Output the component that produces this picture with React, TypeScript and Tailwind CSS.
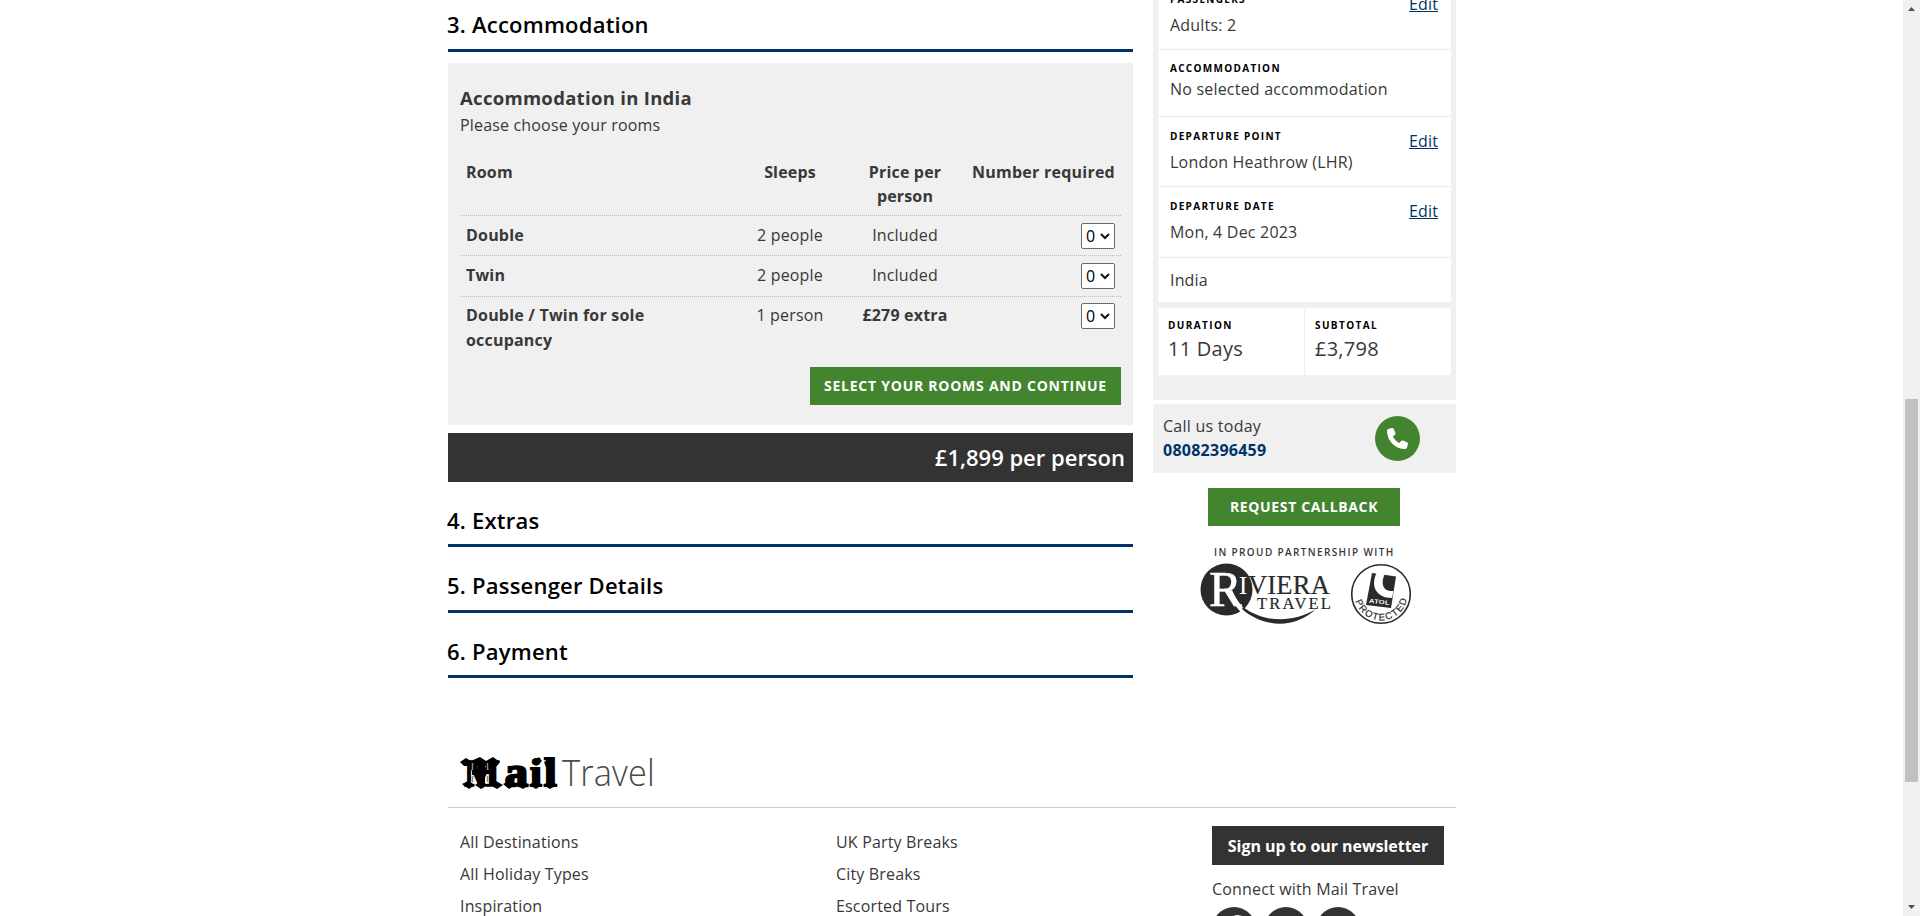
import React from "react";

const links = [
  ["All Destinations", "UK Party Breaks"],
  ["All Holiday Types", "City Breaks"],
  ["Inspiration", "Escorted Tours"],
];

const rooms = [
  { name: "Double", sleeps: "2 people", price: "Included", extra: false, row: "h-10 border-b pt-[7px]" },
  { name: "Twin", sleeps: "2 people", price: "Included", extra: false, row: "h-[41px] border-b pt-[7px]" },
  { name: "Double / Twin for sole occupancy", sleeps: "1 person", price: "£279 extra", extra: true, row: "h-[70px] pt-[6px]" },
];

function StepHeading({ children, className }: { children: React.ReactNode; className: string }) {
  return (
    <h2 className={"-ml-px w-[686px] text-[22px] font-semibold leading-8 tracking-[0.22px] text-black " + className}>
      {children}
    </h2>
  );
}

function Rule() {
  return <div className="h-[3px] bg-[#003468]" />;
}

function Quantity() {
  return (
    <button className="flex h-[26px] w-[34px] items-center justify-between rounded-[2px] border border-[#6b6b6b] bg-white pl-[4px] pr-[4px] text-base leading-6 text-black">
      <span>0</span>
      <svg width="10" height="8" viewBox="0 0 10 8" fill="none" stroke="#111" strokeWidth="2">
        <path d="M1 2l4 4 4-4" />
      </svg>
    </button>
  );
}

function Field({ label, value, edit, box, labelBox, editBox = "mt-[3px]" }: { label: string; value: string; edit?: boolean; box: string; labelBox: string; editBox?: string }) {
  return (
    <div className={"flex items-start justify-between border-b border-[#ececec] bg-white pl-3 pr-[13px] " + box}>
      <div>
        <div className={"text-[10px] font-bold uppercase leading-4 tracking-[1.3px] text-black " + labelBox}>{label}</div>
        <div className="leading-6 tracking-[0.2px]">{value}</div>
      </div>
      {edit && <a className={"leading-6 tracking-[0.12px] text-[#003468] underline " + editBox}>Edit</a>}
    </div>
  );
}

function RivieraLogo() {
  return (
    <svg width="133" height="62" viewBox="0 0 133 62" className="overflow-visible">
      <circle cx="26.500" cy="26.500" r="26" fill="#2b2a2b" />
      <text x="9" y="43" fontFamily="Liberation Serif, serif" fontSize="51" fill="#fff" stroke="#fff" strokeWidth=".5" textLength="33" lengthAdjust="spacingAndGlyphs">R</text>
      <path d="M32 27C37 38 42 44 48 49L43 51C37 46 32 38 28 29Z" fill="#fff" />
      <path d="M43 44C64 60 93 60 116 46C94 67 62 64 42 46Z" fill="#2b2a2b" />
      <text x="39" y="31" fontFamily="Liberation Serif, serif" fontSize="25" fill="#fff">I</text>
      <text x="48" y="31" fontFamily="Liberation Serif, serif" fontSize="28" fill="#2b2a2b" stroke="#2b2a2b" strokeWidth=".2" textLength="82" lengthAdjust="spacingAndGlyphs">VIERA</text>
      <text x="57" y="45.500" fontFamily="Liberation Serif, serif" fontSize="16.500" fill="#2b2a2b" stroke="#2b2a2b" strokeWidth=".2" textLength="74">TRAVEL</text>
    </svg>
  );
}

function AtolLogo() {
  return (
    <svg width="62" height="62" viewBox="0 0 62 62">
      <circle cx="31" cy="31" r="29.300" fill="#fff" stroke="#2b2a2b" strokeWidth="1.600" />
      <path d="M22 10L46 13.500L41 45L16 42Z" fill="#2b2a2b" />
      <path d="M26.500 10C20 24 27 35 42 35L43.500 28C34 29 30 22 34.500 11.500Z" fill="#fff" />
      <text x="19" y="41" fontFamily="Liberation Sans, sans-serif" fontWeight="bold" fontSize="6" fill="#fff" textLength="21" lengthAdjust="spacingAndGlyphs" transform="rotate(6 30 38)">ATOL</text>
      <path id="atol-arc" d="M4.500 33A26.600 26.600 0 0 0 57.500 33" fill="none" />
      <text fontFamily="Liberation Sans, sans-serif" fontSize="9.500" fill="#2b2a2b" stroke="#2b2a2b" strokeWidth=".2">
        <textPath href="#atol-arc" startOffset="5" textLength="70">PROTECTED</textPath>
      </text>
    </svg>
  );
}

function MailLogo() {
  return (
    <svg width="196" height="36" viewBox="0 0 196 36">
      <g fill="#000" stroke="#000" fontFamily="Liberation Serif, serif" fontWeight="bold">
        <text x="4" y="28.500" fontSize="37" strokeWidth="1.500" textLength="36" lengthAdjust="spacingAndGlyphs">M</text>
        <text x="45" y="29" fontSize="40" strokeWidth="2.500" textLength="23" lengthAdjust="spacingAndGlyphs">a</text>
        <text x="70" y="29" fontSize="38" strokeWidth="2" textLength="12" lengthAdjust="spacingAndGlyphs">i</text>
        <text x="84" y="29" fontSize="39" strokeWidth="2" textLength="13" lengthAdjust="spacingAndGlyphs">l</text>
      </g>
      <path d="M0 5L6 1L11 4L20 0L26 4L33 0L40 5L37 9H4ZM2 27L8 24L15 28L9 32ZM15 28L21 24L28 28L21 32ZM30 28L36 24L43 28L37 32ZM18 8H25V26H18ZM12 14L30 13V17L12 18ZM43 27L49 24L55 28L49 32ZM56 28L63 24L69 28L63 32ZM69 28L75 24L82 28L76 32ZM83 28L90 24L97 28L90 32ZM74 4L79 0L82 4L77 8ZM84 5L93 1V8L86 10Z" fill="#000" />
      <path d="M12.500 6V13M12.500 19V25M27.500 6V13M27.500 19V25" stroke="#888" strokeWidth="1.500" />
      <text x="102" y="28.500" fontFamily="Open Sans, sans-serif" fontWeight="300" fontSize="36" fill="#4a4a4a" textLength="93" lengthAdjust="spacingAndGlyphs">Travel</text>
    </svg>
  );
}

export default function App() {
  return (
    <div className="flex h-[916px] w-full overflow-hidden bg-white font-['Open_Sans',sans-serif] text-base tracking-[0.17px] text-[#383838]">
      <div className="flex-1 pl-[448px]">
        <div className="flex h-[738px] w-[1008px] justify-between">
          <main className="w-[685px]">
            <StepHeading className="h-[49px] pt-[8px]">3. Accommodation</StepHeading>
            <Rule />
            <section className="mt-[11px] h-[362px] bg-[#f0f0f0] px-3 pt-[22px]">
              <h3 className="text-[18.500px] font-bold leading-[26px] tracking-[0.3px]">Accommodation in India</h3>
              <p className="mt-[2px] leading-6">Please choose your rooms</p>
              <div className="mt-[15px] leading-[24.500px]">
                <div className="flex h-[64px] border-b border-dotted border-[#bbb] px-1.5 pt-[8px] font-bold leading-6">
                  <div className="w-[274px]">Room</div>
                  <div className="w-[100px] text-center">Sleeps</div>
                  <div className="ml-[15px] w-[100px] text-center">Price per person</div>
                  <div className="flex flex-1 justify-end whitespace-nowrap tracking-[0.25px]">Number required</div>
                </div>
                {rooms.map((r) => (
                  <div key={r.name} className={"flex border-dotted border-[#bbb] px-1.5 " + r.row}>
                    <div className="w-[274px] pr-16 font-bold tracking-[0.2px]">{r.name}</div>
                    <div className="w-[100px] text-center">{r.sleeps}</div>
                    <div className={r.extra ? "ml-[15px] w-[100px] text-center font-bold" : "ml-[15px] w-[100px] text-center"}>{r.price}</div>
                    <div className="flex flex-1 items-start justify-end"><Quantity /></div>
                  </div>
                ))}
              </div>
              <div className="flex justify-end">
                <button className="h-[38px] w-[311px] bg-[#43842f] text-sm font-bold tracking-[0.75px] text-white">SELECT YOUR ROOMS AND CONTINUE</button>
              </div>
            </section>
            <div className="mt-2 flex h-[49px] items-center justify-end bg-[#333] pr-2 text-[22px] font-semibold tracking-normal text-white">£1,899 per person</div>
            <StepHeading className="h-[62px] pt-[22px]">4. Extras</StepHeading>
            <Rule />
            <StepHeading className="h-[63px] pt-[22px]">5. Passenger Details</StepHeading>
            <Rule />
            <StepHeading className="h-[62px] pt-[22px]">6. Payment</StepHeading>
            <Rule />
          </main>

          <aside className="w-[303px]">
            <div className="h-[400px] bg-[#f0f0f0] px-[5px]">
              <Field label="Passengers" value="Adults: 2" edit box="h-[50px]" labelBox="-mt-[9px] mb-[6px]" editBox="-mt-[8px]" />
              <Field label="Accommodation" value="No selected accommodation" box="h-[67px]" labelBox="mt-[10px] mb-px" />
              <Field label="Departure point" value="London Heathrow (LHR)" edit box="h-[70px] pt-[9px]" labelBox="mt-[2px] mb-[6px]" />
              <Field label="Departure date" value="Mon, 4 Dec 2023" edit box="h-[71px] pt-[9px]" labelBox="mt-[2px] mb-[6px]" />
              <div className="h-11 bg-white pl-3 pt-[10px] leading-6">India</div>
              <div className="mt-[6px] flex h-[67px] gap-px">
                {[["Duration", "11 Days", "w-[146px]"], ["Subtotal", "£3,798", "w-[146px]"]].map(([a, b, w]) => (
                  <div key={a} className={"bg-white pl-[10px] pt-[9px] " + w}>
                    <div className="text-[10px] font-bold uppercase leading-4 tracking-[1.4px] text-black">{a}</div>
                    <div className="mt-[2px] text-[20px] leading-7 tracking-[0.25px]">{b}</div>
                  </div>
                ))}
              </div>
            </div>
            <div className="mt-1 flex h-[69px] items-center justify-between bg-[#f0f0f0] pl-[10px] pr-9">
              <div className="pb-[2px] leading-6 tracking-[0.25px]">
                <div>Call us today</div>
                <div className="font-bold text-[#003468]">08082396459</div>
              </div>
              <div className="flex h-[45px] w-[45px] items-center justify-center rounded-full bg-[#43842f]">
                <svg width="21" height="21" viewBox="0 0 512 512" fill="#fff">
                  <path d="M164.900 24.600c-7.700-18.600-28-28.500-47.400-23.200l-88 24C12.100 30.200 0 46 0 64c0 247.400 200.600 448 448 448 18 0 33.800-12.100 38.600-29.500l24-88c5.300-19.400-4.600-39.700-23.200-47.400l-96-40c-16.300-6.800-35.200-2.100-46.300 11.600L304.700 368C234.300 334.700 177.300 277.700 144 207.300L193.300 167c13.700-11.200 18.400-30 11.600-46.300l-40-96z" />
                </svg>
              </div>
            </div>
            <button className="ml-[55px] mt-[15px] block h-[38px] w-[192px] bg-[#43842f] text-sm font-bold tracking-[0.65px] text-white">REQUEST CALLBACK</button>
            <div className="ml-[61px] mt-[18px] whitespace-nowrap text-[10px] font-semibold leading-4 tracking-[1.370px]">IN PROUD PARTNERSHIP WITH</div>
            <div className="ml-[47px] mt-[3px] flex gap-[17px]">
              <RivieraLogo />
              <AtolLogo />
            </div>
          </aside>
        </div>

        <footer className="w-[1008px]">
          <div className="h-[70px] border-b border-[#ccc] pl-3 pt-[19px]">
            <MailLogo />
          </div>
          <div className="flex pl-3 pt-[18px]">
            <div className="w-[752px] pt-[4px]">
              {links.map(([a, b]) => (
                <div key={a} className="flex h-8 leading-6">
                  <a className="w-[376px]">{a}</a>
                  <a>{b}</a>
                </div>
              ))}
            </div>
            <div className="w-[232px]">
              <button className="h-[39px] w-full bg-[#333] font-bold tracking-[-0.05px] text-white">Sign up to our newsletter</button>
              <div className="mt-3 leading-6">Connect with Mail Travel</div>
              <div className="mt-[6px] flex gap-2">
                {["f", "t", "i"].map((s) => (
                  <div key={s} className="flex h-11 w-11 justify-center rounded-full bg-[#333]">
                    {s === "f" && (
                      <svg className="mt-2" width="24" height="28" viewBox="0 0 24 28">
                        <path d="M20 1V6H17C15 6 14 7 14 9V12H20L19 17H14V28H8V17H4V12H8V8C8 3 11 0 16 0Z" fill="#fff" />
                      </svg>
                    )}
                  </div>
                ))}
              </div>
            </div>
          </div>
        </footer>
      </div>

      <div className="flex h-[916px] w-[17px] flex-col items-center bg-[#f1f1f1]">
        <svg className="mt-[6px]" width="7" height="5" viewBox="0 0 7 5"><path d="M0 5L3.500 1L7 5Z" fill="#505050" /></svg>
        <div className="mt-[388px] h-[383px] w-[13px] bg-[#c1c1c1]" />
        <svg className="mt-[123px]" width="7" height="5" viewBox="0 0 7 5"><path d="M0 0H7L3.500 4Z" fill="#505050" /></svg>
      </div>
    </div>
  );
}
